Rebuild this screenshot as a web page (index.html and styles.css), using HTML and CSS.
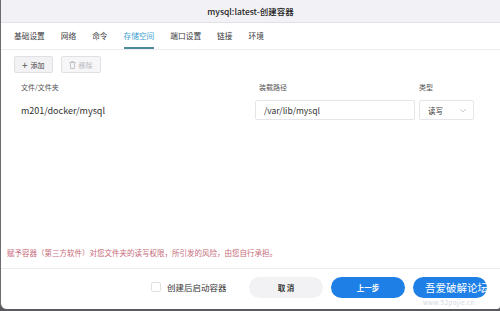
FILE: index.html
```html
<!DOCTYPE html>
<html lang="zh">
<head>
<meta charset="utf-8">
<link rel="stylesheet" href="styles.css">
</head>
<body>
<div class="window">
  <div class="header">mysql:latest-创建容器</div>
  <div class="tabs">
    <span class="tab">基础设置</span>
    <span class="tab">网络</span>
    <span class="tab">命令</span>
    <span class="tab active">存储空间</span>
    <span class="tab">端口设置</span>
    <span class="tab">链接</span>
    <span class="tab">环境</span>
  </div>
  <div class="toolbar">
    <button class="tbtn"><span class="plus">+</span>添加</button>
    <button class="tbtn disabled">
      <svg class="trash" width="7" height="8" viewBox="0 0 7 8"><path d="M0.5 1.5h6M2.5 1.5V0.6h2v0.9M1.3 1.5l0.4 6h3.6l0.4-6" fill="none" stroke="#b8b8bc" stroke-width="0.8"/></svg>移除
    </button>
  </div>
  <div class="table">
    <div class="thead">
      <span class="c1">文件/文件夹</span>
      <span class="c2">装载路径</span>
      <span class="c3">类型</span>
    </div>
    <div class="trow">
      <span class="c1 path">m201/docker/mysql</span>
      <span class="c2"><span class="input">/var/lib/mysql</span></span>
      <span class="c3"><span class="select">读写<svg width="8" height="5" viewBox="0 0 8 5"><path d="M1 1l3 3 3-3" fill="none" stroke="#c4c4c8" stroke-width="0.9"/></svg></span></span>
    </div>
  </div>
  <div class="spacer"></div>
  <div class="warning">赋予容器（第三方软件）对您文件夹的读写权限，所引发的风险，由您自行承担。</div>
  <div class="footer">
    <label class="check"><span class="box"></span>创建后启动容器</label>
    <button class="btn grey">取 消</button>
    <button class="btn blue">上一步</button>
    <button class="btn blue wm">吾爱破解论坛<span class="wmsub">www.52pojie.cn</span></button>
  </div>
</div>
</body>
</html>
```
FILE: styles.css
```css
* { box-sizing: border-box; }
html, body { margin: 0; padding: 0; }
body {
  width: 500px;
  height: 311px;
  background: #5a5a5e;
  font-family: "Noto Sans CJK SC", "Noto Sans", sans-serif;
  overflow: hidden;
}
.window {
  width: 500px;
  height: 309px;
  background: #fff;
  border-left: 1px solid #6b6b70;
  border-bottom-left-radius: 6px;
  border-bottom-right-radius: 3px;
  display: flex;
  flex-direction: column;
  overflow: hidden;
}
.header {
  height: 23px;
  background: #f2f2f6;
  border-bottom: 1px solid #e2e2e6;
  text-align: center;
  font-size: 8.5px;
  line-height: 22px;
  color: #222;
  font-weight: 500;
}
.tabs {
  display: flex;
  height: 27px;
  padding-left: 13px;
  border-bottom: 1px solid #ececef;
  align-items: stretch;
}
.tab {
  font-size: 7.7px;
  color: #3a3a3e;
  line-height: 26px;
  margin-right: 16px;
  border-bottom: 2px solid transparent;
}
.tab.active {
  color: #3c9fd0;
  border-bottom-color: #4f8a9a;
}
.toolbar {
  display: flex;
  gap: 8px;
  padding: 6px 0 0 13px;
}
.tbtn {
  height: 17px;
  padding: 0 7px;
  font-family: inherit;
  font-size: 7px;
  color: #444;
  background: #f2f2f4;
  border: 1px solid #e0e0e4;
  border-radius: 2px;
  display: flex;
  align-items: center;
  gap: 3px;
}
.tbtn .plus { font-size: 10px; line-height: 1; color: #555; }
.tbtn.disabled { color: #b8b8bc; background: #f6f6f8; }
.table { padding: 0 13px 0 20px; }
.thead, .trow {
  display: flex;
  align-items: center;
}
.thead { height: 22px; margin-top: 3px; font-size: 7px; color: #555; }
.trow { height: 24px; }
.c1 { width: 234px; }
.c2 { width: 164px; }
.c3 { width: 60px; }
.thead .c2 { padding-left: 4px; }
.path { font-size: 9px; color: #333; }
.input {
  display: block;
  width: 160px;
  height: 20px;
  border: 1px solid #e6e6ea;
  border-radius: 2px;
  font-size: 8.5px;
  line-height: 18px;
  padding-left: 8px;
  color: #333;
}
.select {
  display: flex;
  align-items: center;
  justify-content: space-between;
  width: 55px;
  height: 20px;
  border: 1px solid #e6e6ea;
  border-radius: 2px;
  font-size: 7.5px;
  color: #333;
  padding: 0 6px 0 8px;
}
.spacer { flex: 1; }
.warning {
  font-size: 7.5px;
  color: #c76a78;
  padding-left: 6px;
  height: 22px;
  line-height: 12px;
  border-bottom: 1px solid #ececef;
}
.footer {
  display: flex;
  align-items: center;
  height: 40px;
  padding-left: 150px;
  padding-bottom: 4px;
}
.check {
  display: flex;
  align-items: center;
  gap: 6px;
  font-size: 8.5px;
  color: #333;
  width: 98px;
}
.box {
  width: 10px;
  height: 10px;
  border: 1px solid #e0e0e4;
  border-radius: 2px;
}
.btn {
  width: 74px;
  height: 21px;
  border-radius: 11px;
  border: none;
  font-family: inherit;
  font-size: 7.5px;
  margin-right: 8px;
  padding: 0;
}
.btn.grey { background: #f2f2f5; color: #333; font-weight: 700; }
.btn.blue { background: #1e7fe6; color: #fff; font-weight: 700; }
.btn.wm {
  position: relative;
  font-size: 10.5px;
  font-weight: 400;
  text-align: left;
  padding-left: 12px;
  white-space: nowrap;
  overflow: visible;
}
.wmsub {
  position: absolute;
  left: 10px;
  top: 21px;
  font-size: 6px;
  color: #d0d4dc;
  letter-spacing: 0.5px;
}
```
